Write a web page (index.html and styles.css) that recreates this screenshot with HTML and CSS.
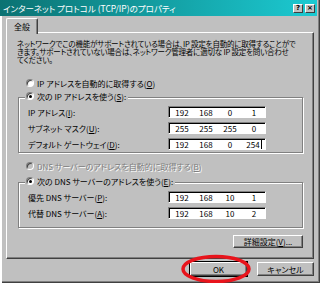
FILE: index.html
```html
<!DOCTYPE html>
<html lang="ja">

<head>
    <meta charset="UTF-8">
    <meta name="viewport" content="width=device-width, initial-scale=1.0">
    <title>インターネット プロトコル (TCP/IP)のプロパティ</title>
    <link rel="stylesheet" href="styles.css">
</head>

<body>
    <div class="window">
        <div class="titlebar">
            <span class="title">インターネット プロトコル (TCP/IP)のプロパティ</span>
            <div class="title-buttons">
                <span class="tbtn">?</span>
                <span class="tbtn">×</span>
            </div>
        </div>

        <div class="tabs">
            <span class="tab">全般</span>
        </div>

        <div class="panel">
            <p class="intro">ネットワークでこの機能がサポートされている場合は、IP 設定を自動的に取得することがで<br>きます。サポートされていない場合は、ネットワーク管理者に適切な IP 設定を問い合わせ<br>てください。</p>

            <div class="radio-row auto-ip"><span class="radio"></span><span>IP アドレスを自動的に取得する(<u>O</u>)</span></div>

            <div class="group group-ip">
                <div class="radio-row legend"><span class="radio checked"></span><span>次の IP アドレスを使う(<u>S</u>):</span></div>
                <div class="field-row">
                    <span class="field-label">IP アドレス(<u>I</u>):</span>
                    <div class="ip"><span>192</span><span>168</span><span>0</span><span>1</span></div>
                </div>
                <div class="field-row">
                    <span class="field-label">サブネット マスク(<u>U</u>):</span>
                    <div class="ip"><span>255</span><span>255</span><span>255</span><span>0</span></div>
                </div>
                <div class="field-row">
                    <span class="field-label">デフォルト ゲートウェイ(<u>D</u>):</span>
                    <div class="ip"><span>192</span><span>168</span><span>0</span><span>254<i class="cursor"></i></span></div>
                </div>
            </div>

            <div class="radio-row auto-dns disabled"><span class="radio"></span><span>DNS サーバーのアドレスを自動的に取得する(<u>B</u>)</span></div>

            <div class="group group-dns">
                <div class="radio-row legend"><span class="radio checked"></span><span>次の DNS サーバーのアドレスを使う(<u>E</u>):</span></div>
                <div class="field-row">
                    <span class="field-label">優先 DNS サーバー(<u>P</u>):</span>
                    <div class="ip"><span>192</span><span>168</span><span>10</span><span>1</span></div>
                </div>
                <div class="field-row">
                    <span class="field-label">代替 DNS サーバー(<u>A</u>):</span>
                    <div class="ip"><span>192</span><span>168</span><span>10</span><span>2</span></div>
                </div>
            </div>

            <button class="btn advanced"><span>詳細設定(<u>V</u>)...</span></button>
        </div>

        <div class="actions">
            <button class="btn default">OK</button>
            <button class="btn">キャンセル</button>
        </div>

        <!-- red marker drawn over the OK button -->
        <svg class="marker" width="320" height="283" viewBox="0 0 320 283">
            <ellipse cx="216" cy="269" rx="33" ry="12.5" fill="none" stroke="#e8141c" stroke-width="3.5" />
        </svg>
    </div>
</body>

</html>
```

FILE: styles.css
```css
:root {
    --face: #c0c0c0;
    --light: #ffffff;
    --shadow: #808080;
    --dark: #404040;
}

* {
    box-sizing: border-box;
}

body {
    margin: 0;
    background: var(--face);
    font-family: "Noto Sans CJK JP", "Noto Sans", sans-serif;
    font-feature-settings: "palt" 1;
    font-size: 8px;
    color: #000;
}

u {
    text-decoration: underline;
    text-underline-offset: 1px;
}

.window {
    position: relative;
    width: 320px;
    height: 283px;
    background: var(--face);
    overflow: hidden;
    box-shadow: inset 2px 0 var(--light), inset -1px -1px var(--dark), inset -2px -2px var(--shadow);
}

.titlebar {
    height: 16px;
    margin-right: 3px;
    padding: 0 2px 0 3px;
    display: flex;
    align-items: center;
    justify-content: space-between;
    background: linear-gradient(to right, #0b7272, #1ccad2);
    color: #fff;
}

.title {
    font-size: 8.5px;
    white-space: nowrap;
}

.title-buttons {
    display: flex;
    gap: 2px;
}

.tbtn {
    width: 10px;
    height: 9px;
    display: flex;
    align-items: center;
    justify-content: center;
    background: var(--face);
    color: #000;
    font-family: "DejaVu Sans", sans-serif;
    font-size: 7px;
    font-weight: bold;
    line-height: 1;
    border: 1px solid;
    border-color: var(--light) var(--dark) var(--dark) var(--light);
}

.tabs {
    margin-top: 2px;
    height: 15px;
    display: flex;
}

.tab {
    position: relative;
    z-index: 1;
    margin-left: 6px;
    width: 32px;
    height: 16px;
    display: flex;
    align-items: center;
    justify-content: center;
    padding-bottom: 1px;
    background: var(--face);
    border-top: 1px solid var(--light);
    border-left: 1px solid var(--light);
    border-right: 1px solid var(--dark);
    border-radius: 2px 2px 0 0;
    box-shadow: inset -1px 0 var(--shadow);
}

.panel {
    margin: -1px 0 0 6px;
    width: 308px;
    height: 227px;
    padding: 7px 10px 0 10px;
    display: flex;
    flex-direction: column;
    border-top: 1px solid var(--light);
    border-left: 1px solid var(--light);
    border-right: 1px solid var(--dark);
    border-bottom: 1px solid var(--dark);
    box-shadow: inset -1px -1px var(--shadow);
}

.intro {
    margin: 0;
    font-size: 7.5px;
    line-height: 8px;
    letter-spacing: -0.2px;
    white-space: nowrap;
}

.radio-row {
    height: 10px;
    display: flex;
    align-items: center;
    gap: 3px;
    padding-left: 9px;
    white-space: nowrap;
}

.auto-ip {
    margin-top: 14px;
}

.auto-dns {
    margin-top: 8px;
}

.radio {
    position: relative;
    width: 8px;
    height: 8px;
    flex: none;
    border-radius: 50%;
    background: #fff;
    border: 1px solid;
    border-color: var(--shadow) var(--light) var(--light) var(--shadow);
    box-shadow: inset 1px 1px var(--dark);
}

.radio.checked::after {
    content: "";
    position: absolute;
    left: 2px;
    top: 2px;
    width: 3px;
    height: 3px;
    border-radius: 50%;
    background: #000;
}

.disabled {
    color: var(--shadow);
    text-shadow: 1px 1px var(--light);
}

.disabled .radio {
    background: var(--face);
}

.group {
    margin-left: 1px;
    width: 285px;
    border: 1px solid var(--shadow);
    box-shadow: inset 1px 1px var(--light), 1px 1px var(--light);
}

.group-ip {
    margin-top: 9px;
    padding-bottom: 2px;
}

.group-dns {
    margin-top: 11px;
    padding-bottom: 8px;
}

.legend {
    width: fit-content;
    margin: -7px 0 0 6px;
    padding: 0 2px 0 1px;
    background: var(--face);
}

.field-row {
    height: 12px;
    margin-top: 4px;
    padding-left: 9px;
    display: flex;
    align-items: center;
}

.legend + .field-row {
    margin-top: 5px;
}

.field-label {
    flex: 1;
    white-space: nowrap;
}

.ip {
    width: 98px;
    height: 12px;
    margin-right: 36px;
    display: flex;
    align-items: center;
    background: #fff;
    border: 1px solid;
    border-color: var(--shadow) var(--light) var(--light) var(--shadow);
    box-shadow: inset 1px 1px #000;
}

.ip span {
    flex: 1;
    display: flex;
    align-items: center;
    justify-content: center;
    padding-left: 2px;
}

.cursor {
    display: inline-block;
    width: 1px;
    height: 9px;
    margin-left: 1px;
    background: #000;
}

.btn {
    height: 14px;
    padding: 0;
    display: flex;
    align-items: center;
    justify-content: center;
    font: inherit;
    color: #000;
    background: var(--face);
    border: 1px solid;
    border-color: var(--light) var(--dark) var(--dark) var(--light);
    box-shadow: inset -1px -1px var(--shadow);
}

.advanced {
    align-self: flex-end;
    margin-top: 7px;
    width: 70px;
    height: 13px;
}

.actions {
    margin-top: 3px;
    padding-right: 6px;
    display: flex;
    justify-content: flex-end;
    gap: 10px;
}

.actions .btn {
    width: 57px;
}

.actions .default {
    outline: 1px solid #000;
    outline-offset: 0;
}

.marker {
    position: absolute;
    left: 0;
    top: 0;
    pointer-events: none;
}
```
